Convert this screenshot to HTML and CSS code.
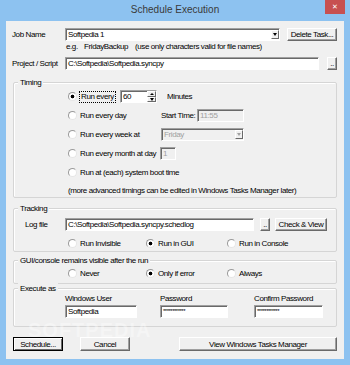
FILE: index.html
```html
<!DOCTYPE html>
<html>
<head>
    <title>Schedule Execution</title>
    <link rel="stylesheet" href="styles.css">
</head>
<body>
    <div class="window">
        <div class="titlebar">
            <span class="title">Schedule Execution</span>
            <span class="close">✕</span>
        </div>
        <div class="client">
            <div class="row job-row">
                <span class="field-label">Job Name</span>
                <div class="edit combo">
                    <span class="value">Softpedia 1</span>
                    <span class="drop"><i class="tri"></i></span>
                </div>
                <button class="btn">Delete Task...</button>
            </div>
            <div class="hint">
                <span class="eg">e.g.</span><span class="ex">FridayBackup</span><span>(use only characters valid for file names)</span>
            </div>
            <div class="row script-row">
                <span class="field-label">Project / Script</span>
                <div class="edit"><span class="value">C:\Softpedia\Softpedia.syncpy</span></div>
                <button class="btn dots">..</button>
            </div>

            <div class="group timing">
                <span class="group-title">Timing</span>
                <div class="timing-grid">
                    <label class="radio-label"><span class="radio checked"></span><span class="focus">Run every</span></label>
                    <div class="edit spin">
                        <span class="value">60</span>
                        <span class="spin-btns"><span class="up"><i class="tri-up"></i></span><span class="down"><i class="tri"></i></span></span>
                    </div>
                    <span class="minutes">Minutes</span>

                    <label class="radio-label wide"><span class="radio"></span><span>Run every day</span></label>
                    <div class="start-time">
                        <span class="start-label">Start Time:</span>
                        <div class="edit disabled time"><span class="value">11:55</span></div>
                    </div>

                    <label class="radio-label wide"><span class="radio"></span><span>Run every week at</span></label>
                    <div class="edit disabled combo week">
                        <span class="value">Friday</span>
                        <span class="drop"><i class="tri"></i></span>
                    </div>

                    <label class="radio-label wide"><span class="radio"></span><span>Run every month at day</span></label>
                    <div class="edit disabled day"><span class="value">1</span></div>

                    <label class="radio-label full"><span class="radio"></span><span>Run at (each) system boot time</span></label>
                    <span class="note full">(more advanced timings can be edited in Windows Tasks Manager later)</span>
                </div>
            </div>

            <div class="group tracking">
                <span class="group-title">Tracking</span>
                <div class="row log-row">
                    <span class="log-label">Log file</span>
                    <div class="edit"><span class="value">C:\Softpedia\Softpedia.syncpy.schedlog</span></div>
                    <button class="btn dots">..</button>
                    <button class="btn check">Check &amp; View</button>
                </div>
                <div class="radio-row">
                    <label class="radio-label"><span class="radio"></span><span>Run Invisible</span></label>
                    <label class="radio-label"><span class="radio checked"></span><span>Run in GUI</span></label>
                    <label class="radio-label"><span class="radio"></span><span>Run in Console</span></label>
                </div>
            </div>

            <div class="group visible">
                <span class="group-title">GUI/console remains visible after the run</span>
                <div class="radio-row">
                    <label class="radio-label"><span class="radio"></span><span>Never</span></label>
                    <label class="radio-label"><span class="radio checked"></span><span>Only if error</span></label>
                    <label class="radio-label"><span class="radio"></span><span>Always</span></label>
                </div>
            </div>

            <div class="group execute">
                <span class="group-title">Execute as</span>
                <div class="account-grid">
                    <span>Windows User</span>
                    <span>Password</span>
                    <span>Confirm Password</span>
                    <div class="edit user"><span class="value">Softpedia</span></div>
                    <div class="edit pass"><span class="value stars">************</span></div>
                    <div class="edit confirm"><span class="value stars">************</span></div>
                </div>
            </div>

            <div class="footer">
                <button class="btn default">Schedule...</button>
                <button class="btn cancel">Cancel</button>
                <button class="btn manager">View Windows Tasks Manager</button>
            </div>

            <div class="watermark">SOFTPEDIA</div>
        </div>
    </div>
</body>
</html>
```
FILE: styles.css
```css
body {
    margin: 0;
    background: #8dc2f0;
    font-family: "Liberation Sans", Arial, sans-serif;
    font-size: 8px;
    letter-spacing: -0.4px;
    color: #000;
}
.window { width: 350px; height: 365px; display: flex; flex-direction: column; }

/* title bar */
.titlebar {
    height: 21px;
    display: grid;
    grid-template-columns: 1fr auto 1fr;
    align-items: start;
}
.title {
    grid-column: 2;
    font-size: 10px;
    letter-spacing: 0;
    line-height: 20px;
    color: #3a3a3a;
}
.close {
    grid-column: 3;
    justify-self: end;
    margin-right: 5px;
    width: 20px;
    height: 14px;
    background: #c75050;
    color: #fff;
    font-family: "DejaVu Sans", sans-serif;
    font-size: 7px;
    letter-spacing: 0;
    line-height: 14px;
    text-align: center;
}

/* dialog body */
.client {
    position: relative;
    margin: 0 6px;
    height: 338px;
    box-sizing: border-box;
    padding: 7px 7px 0 6px;
    background: #f0f0f0;
}
.row { display: flex; align-items: center; height: 13px; }
.field-label { width: 53px; flex: none; white-space: nowrap; }

/* classic sunken edit box */
.edit {
    display: flex;
    align-items: center;
    height: 13px;
    box-sizing: border-box;
    padding-left: 2px;
    background: #fff;
    border: 1px solid;
    border-color: #a0a0a0 #fff #fff #a0a0a0;
    box-shadow: inset 1px 1px #696969;
    overflow: hidden;
    white-space: nowrap;
}
.edit .value { line-height: 11px; }
.edit.disabled { background: #f0f0f0; color: #a0a0a0; }

.drop {
    margin-left: auto;
    width: 8px;
    height: 9px;
    flex: none;
    box-sizing: border-box;
    display: flex;
    align-items: center;
    justify-content: center;
    background: #f0f0f0;
    border: 1px solid;
    border-color: #fff #696969 #696969 #fff;
}
.tri {
    width: 0;
    height: 0;
    border-left: 2.5px solid transparent;
    border-right: 2.5px solid transparent;
    border-top: 3px solid #000;
}
.tri-up {
    width: 0;
    height: 0;
    border-left: 2px solid transparent;
    border-right: 2px solid transparent;
    border-bottom: 2px solid #000;
}
.disabled .tri { border-top-color: #a0a0a0; }

/* classic raised button */
.btn {
    height: 13px;
    box-sizing: border-box;
    padding: 0;
    font: inherit;
    letter-spacing: inherit;
    line-height: 11px;
    color: #000;
    background: #f0f0f0;
    border: 1px solid;
    border-color: #fff #696969 #696969 #fff;
    box-shadow: inset -1px -1px #a0a0a0;
    white-space: nowrap;
}
.btn.dots { width: 10px; flex: none; }

.job-row .combo { width: 215px; }
.job-row .btn { width: 50px; margin-left: 7px; }

.hint { height: 11px; line-height: 11px; margin: 0 0 5px 54px; white-space: nowrap; }
.hint span { display: inline-block; }
.hint .eg { width: 18px; }
.hint .ex { width: 51px; }

.script-row .edit { width: 254px; }
.script-row .dots { margin-left: 8px; }

/* group boxes */
.group {
    position: relative;
    margin-left: 1px;
    border: 1px solid #d5d5d5;
    border-radius: 2px;
    box-shadow: inset 1px 1px #fff;
}
.group-title {
    position: absolute;
    top: -6px;
    left: 4px;
    padding: 0 2px;
    line-height: 11px;
    background: #f0f0f0;
    white-space: nowrap;
}

.radio-label { display: flex; align-items: center; gap: 3px; white-space: nowrap; }
.radio {
    width: 9px;
    height: 9px;
    flex: none;
    box-sizing: border-box;
    border-radius: 50%;
    border: 1px solid;
    border-color: #9a9a9a #e6e6e6 #e6e6e6 #9a9a9a;
    background: #fff;
}
.radio.checked { background: radial-gradient(circle, #000 0 1.5px, #fff 2.2px); }
.focus { outline: 1px dotted #000; padding: 0 1px; line-height: 10px; }

.timing { margin-top: 12px; padding: 7px 0 1px 54px; }
.timing-grid {
    display: grid;
    grid-template-columns: 52px 40px 1fr;
    grid-template-rows: repeat(5, 13px) 11px;
    row-gap: 6px;
    align-items: center;
}
.timing-grid .wide { grid-column: 1 / 3; }
.timing-grid .full { grid-column: 1 / 4; white-space: nowrap; }
.spin { width: 37px; padding-right: 0; }
.spin-btns { margin-left: auto; width: 9px; height: 11px; display: flex; flex-direction: column; }
.spin-btns span {
    flex: 1;
    display: flex;
    align-items: center;
    justify-content: center;
    background: #f0f0f0;
    border: 1px solid;
    border-color: #fff #696969 #696969 #fff;
}
.minutes { margin-left: 7px; }
.start-time { display: flex; align-items: center; margin-left: 1px; white-space: nowrap; }
.start-label { width: 36px; }
.time { width: 47px; }
.week { width: 83px; margin-left: 1px; }
.day { width: 16px; }

.tracking { margin-top: 10px; padding: 9px 0 2px 11px; }
.log-label { width: 40px; flex: none; }
.log-row .edit { width: 189px; }
.log-row .dots { margin-left: 6px; }
.log-row .check { width: 52px; margin-left: 5px; }
.radio-row {
    display: grid;
    grid-template-columns: 78px 81px auto;
    align-items: center;
    height: 12px;
}
.tracking .radio-row { margin: 6px 0 0 43px; }

.visible { margin-top: 8px; padding: 6px 0 4px 54px; }

.execute { margin-top: 4px; padding: 5px 0 8px 51px; }
.account-grid {
    display: grid;
    grid-template-columns: 95px 94px 69px;
    grid-template-rows: 10px 13px;
    row-gap: 1px;
    align-items: center;
    white-space: nowrap;
}
.account-grid span { line-height: 10px; }
.user { width: 72px; }
.pass { width: 68px; }
.confirm { width: 69px; }
.stars { font-size: 6px; letter-spacing: -0.5px; align-self: flex-start; }

.footer { display: flex; margin-top: 10px; }
.footer .btn { height: 14px; }
.btn.default {
    width: 50px;
    margin-left: 1px;
    border-color: #000;
    box-shadow: inset 1px 1px #fff, inset -1px -1px #696969;
}
.btn.cancel { width: 50px; margin-left: 17px; }
.btn.manager { width: 158px; margin-left: auto; }

.watermark {
    position: absolute;
    left: 22px;
    top: 298px;
    font-weight: bold;
    font-size: 20px;
    letter-spacing: 1px;
    color: rgba(255, 255, 255, 0.35);
    pointer-events: none;
}
```
